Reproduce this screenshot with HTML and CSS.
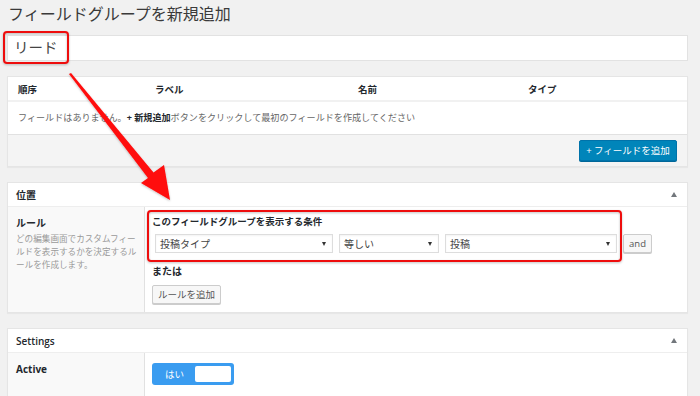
FILE: index.html
```html
<!DOCTYPE html>
<html lang="ja">
<head>
    <meta charset="UTF-8">
    <meta name="viewport" content="width=device-width, initial-scale=1.0">
    <title>フィールドグループを新規追加</title>
    <link rel="stylesheet" href="styles.css">
</head>
<body>
    <div class="wrap">
        <h1 class="page-title">フィールドグループを新規追加</h1>
        <div class="title-input">リード</div>

        <div class="postbox fields">
            <div class="fields-head">
                <span>順序</span>
                <span>ラベル</span>
                <span>名前</span>
                <span>タイプ</span>
            </div>
            <div class="fields-empty">フィールドはありません。<b>+ 新規追加</b>ボタンをクリックして最初のフィールドを作成してください</div>
            <div class="fields-foot">
                <button class="btn-primary">+ フィールドを追加</button>
            </div>
        </div>

        <div class="postbox">
            <div class="postbox-head">
                <h2>位置</h2>
                <span class="handle"></span>
            </div>
            <div class="setting-row">
                <div class="setting-label">
                    <h3>ルール</h3>
                    <p>どの編集画面でカスタムフィールドを表示するかを決定するルールを作成します。</p>
                </div>
                <div class="setting-input">
                    <h4>このフィールドグループを表示する条件</h4>
                    <div class="rule-row">
                        <div class="select sel-param">投稿タイプ<span class="caret"></span></div>
                        <div class="select sel-op">等しい<span class="caret"></span></div>
                        <div class="select sel-value">投稿<span class="caret"></span></div>
                        <button class="btn btn-and">and</button>
                    </div>
                    <h4 class="or-title">または</h4>
                    <button class="btn">ルールを追加</button>
                </div>
            </div>
        </div>

        <div class="postbox">
            <div class="postbox-head">
                <h2 class="latin">Settings</h2>
                <span class="handle"></span>
            </div>
            <div class="setting-row settings-body">
                <div class="setting-label">
                    <h3 class="latin">Active</h3>
                </div>
                <div class="setting-input">
                    <div class="switch">
                        <span class="switch-on">はい</span>
                        <span class="switch-knob"></span>
                    </div>
                </div>
            </div>
        </div>
    </div>

    <!-- 注釈（赤枠と矢印） -->
    <svg class="annotations" width="700" height="396" viewBox="0 0 700 396">
        <defs>
            <filter id="soft" x="-10%" y="-10%" width="120%" height="120%">
                <feDropShadow dx="0" dy="1" stdDeviation="1" flood-color="#000" flood-opacity="0.25"/>
            </filter>
        </defs>
        <rect x="4" y="32" width="64" height="31" rx="3" fill="none" stroke="#ee1111" stroke-width="2" filter="url(#soft)"/>
        <rect x="148" y="211" width="473" height="50" rx="3" fill="none" stroke="#ee1111" stroke-width="2" filter="url(#soft)"/>
        <polygon points="69,74 71,73 153.5,172.5 164,165 170,200 141,183 148,178" fill="#ff0a0a" filter="url(#soft)"/>
    </svg>
</body>
</html>
```

FILE: styles.css
```css
body {
    margin: 0;
    background: #f1f1f1;
    font-family: 'Open Sans', 'Noto Sans CJK JP', sans-serif;
    color: #23282d;
    position: relative;
    overflow: hidden;
    height: 396px;
}

.wrap {
    width: 681px;
    padding-left: 7px;
}

.page-title {
    margin: 0;
    padding: 4px 0 0 1px;
    height: 31px;
    font-size: 16px;
    line-height: 20px;
    font-weight: normal;
    color: #3a3a3a;
    box-sizing: border-box;
}

.title-input {
    height: 26px;
    margin-top: 4px;
    box-sizing: border-box;
    border: 1px solid #e2e2e2;
    background: #fff;
    padding-left: 6px;
    font-size: 14.5px;
    line-height: 24px;
    color: #444;
}

.postbox {
    background: #fff;
    border: 1px solid #e5e5e5;
    box-shadow: 0 1px 1px rgba(0, 0, 0, 0.04);
    margin-bottom: 15px;
}

.fields {
    margin-top: 15px;
}

.fields-head {
    display: grid;
    grid-template-columns: 137px 203px 170px 1fr;
    height: 23px;
    padding-left: 10px;
    align-items: center;
    font-size: 9.5px;
    font-weight: bold;
    border-bottom: 2px solid #f1f1f1;
}

.fields-empty {
    height: 32px;
    padding-left: 10px;
    font-size: 9.1px;
    line-height: 31px;
    color: #666;
}

.fields-empty b {
    color: #23282d;
}

.fields-foot {
    height: 31px;
    background: #f4f4f4;
    border-top: 1px solid #e1e1e1;
    display: flex;
    justify-content: flex-end;
    align-items: center;
    padding-right: 10px;
}

.btn-primary {
    width: 98px;
    height: 21px;
    padding: 0;
    background: #0085ba;
    border: 1px solid #0073aa;
    border-radius: 2px;
    box-shadow: 0 1px 0 #006799;
    color: #fff;
    font-family: inherit;
    font-size: 9.5px;
    line-height: 19px;
}

.postbox-head {
    height: 23px;
    border-bottom: 1px solid #eee;
    display: flex;
    align-items: center;
    justify-content: space-between;
    padding: 0 10px 0 8px;
}

.postbox-head h2 {
    margin: 0;
    font-size: 10px;
    font-weight: bold;
}

.postbox-head h2.latin {
    font-weight: 600;
}

.handle {
    width: 0;
    height: 0;
    border-left: 3px solid transparent;
    border-right: 3px solid transparent;
    border-bottom: 5px solid #72777c;
}

.setting-row {
    display: flex;
}

.settings-body {
    min-height: 60px;
}

.setting-label {
    width: 128px;
    flex-shrink: 0;
    background: #f9f9f9;
    border-right: 1px solid #e1e1e1;
    padding: 9px 0 0 8px;
}

.setting-label h3 {
    margin: 0 0 3px;
    font-size: 10px;
    line-height: 14px;
    font-weight: bold;
}

.setting-label p {
    margin: 0;
    width: 122px;
    font-size: 8.6px;
    line-height: 13px;
    color: #999;
}

.setting-input {
    flex: 1;
    padding: 8px 0 8px 7px;
}

.setting-input h4 {
    margin: 0 0 5px;
    font-size: 9.5px;
    line-height: 14px;
    font-weight: bold;
}

.setting-input h4.or-title {
    margin: 11px 0 3px;
    font-size: 10px;
}

.rule-row {
    display: flex;
    align-items: center;
    padding-left: 3px;
}

.select {
    height: 19px;
    box-sizing: border-box;
    border: 1px solid #ddd;
    box-shadow: inset 0 1px 2px rgba(0, 0, 0, 0.05);
    display: flex;
    align-items: center;
    justify-content: space-between;
    padding: 0 6px 0 4px;
    font-size: 10px;
    color: #444;
    margin-right: 6px;
}

.sel-param {
    width: 178px;
}

.sel-op {
    width: 100px;
}

.sel-value {
    width: 172px;
}

.caret {
    width: 0;
    height: 0;
    border-left: 2.5px solid transparent;
    border-right: 2.5px solid transparent;
    border-top: 4px solid #333;
}

.btn {
    height: 19px;
    padding: 0 5px;
    background: #f7f7f7;
    border: 1px solid #ccc;
    border-radius: 2px;
    box-shadow: 0 1px 0 #ccc;
    color: #555;
    font-family: inherit;
    font-size: 9.5px;
    line-height: 17px;
}

.btn-and {
    width: 29px;
    padding: 0;
}

.switch {
    margin-top: 2px;
    width: 82px;
    height: 22px;
    box-sizing: border-box;
    background: #3a9cf0;
    border-radius: 3px;
    display: flex;
    align-items: center;
    justify-content: space-between;
    padding: 0 3px 0 13px;
}

.switch-on {
    color: #fff;
    font-size: 9.5px;
}

.switch-knob {
    width: 36px;
    height: 16px;
    background: #fff;
    border-radius: 2px;
}

.annotations {
    position: absolute;
    left: 0;
    top: 0;
    pointer-events: none;
}
```
